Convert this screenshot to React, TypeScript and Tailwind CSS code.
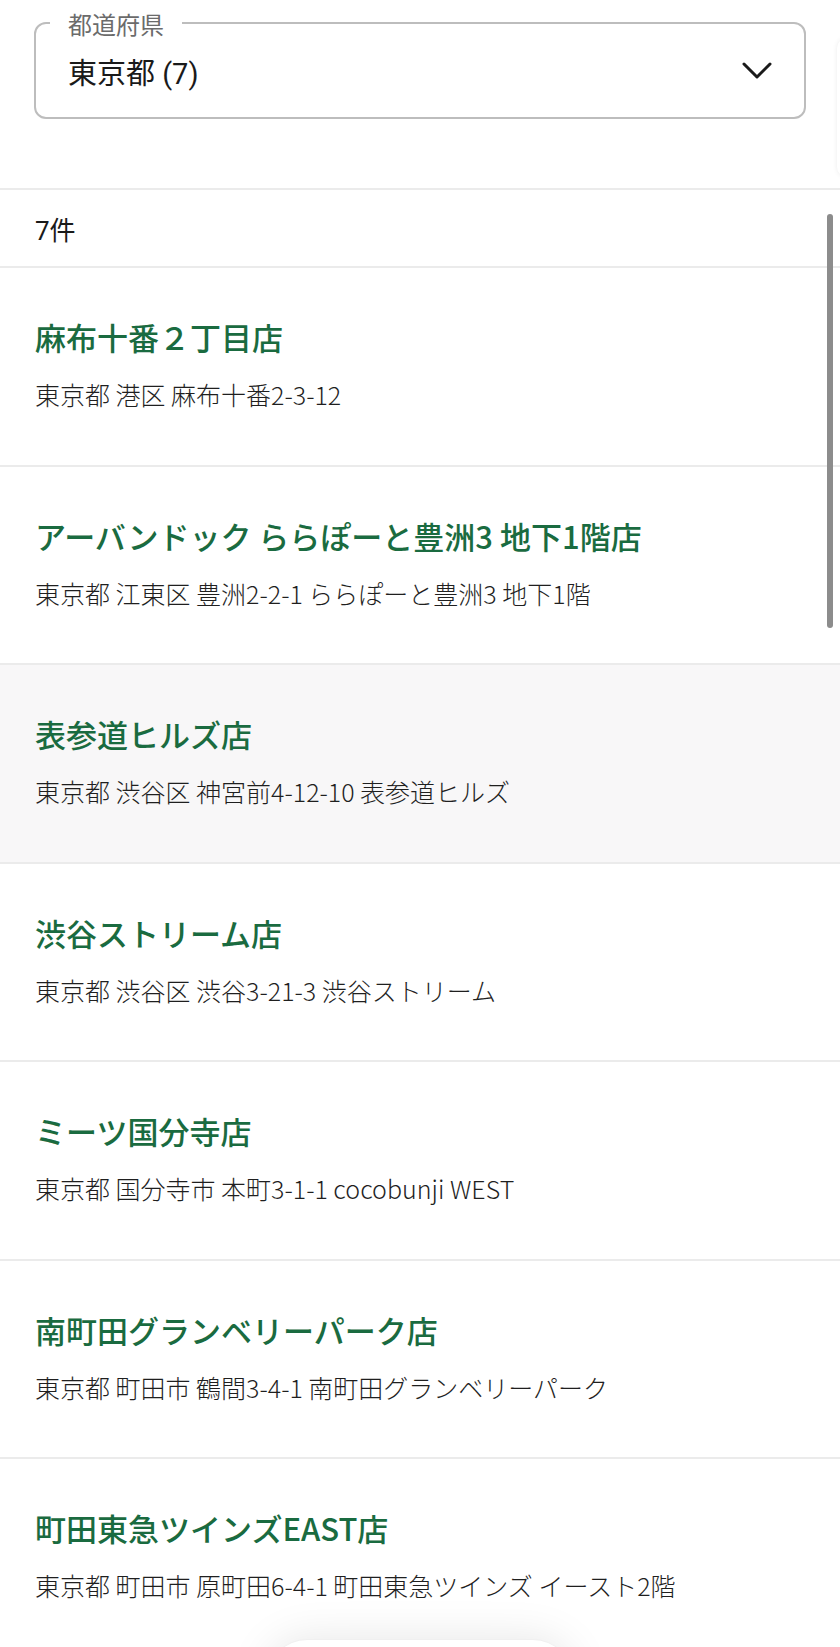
export default function App() {
  // 店舗リスト
  const stores = [
    { name: '麻布十番２丁目店', address: '東京都 港区 麻布十番2-3-12' },
    { name: 'アーバンドック ららぽーと豊洲3 地下1階店', address: '東京都 江東区 豊洲2-2-1 ららぽーと豊洲3 地下1階' },
    { name: '表参道ヒルズ店', address: '東京都 渋谷区 神宮前4-12-10 表参道ヒルズ', active: true },
    { name: '渋谷ストリーム店', address: '東京都 渋谷区 渋谷3-21-3 渋谷ストリーム' },
    { name: 'ミーツ国分寺店', address: '東京都 国分寺市 本町3-1-1 cocobunji WEST' },
    { name: '南町田グランベリーパーク店', address: '東京都 町田市 鶴間3-4-1 南町田グランベリーパーク' },
    { name: '町田東急ツインズEAST店', address: '東京都 町田市 原町田6-4-1 町田東急ツインズ イースト2階' },
  ];

  return (
    <div className="relative w-[840px] h-[1647px] overflow-hidden bg-white font-['Noto_Sans_CJK_JP',sans-serif] text-[#212121]">
      {/* 都道府県セレクト */}
      <div className="h-[188px] px-[34px] pt-[22px]">
        <div className="relative h-[97px] rounded-[12px] border-2 border-[#bdbdbd] flex items-center justify-between pl-[32px] pr-[32px]">
          <span className="absolute left-[14px] top-0 -translate-y-1/2 bg-white px-[18px] text-[24px] leading-none text-[#6b6b6b]">
            都道府県
          </span>
          <span className="mt-[6px] text-[29px] leading-[34px] font-['Roboto','Noto_Sans_CJK_JP',sans-serif] text-[#1a1a1a]">
            東京都 (7)
          </span>
          <svg width="30" height="17" viewBox="0 0 30 17" fill="none">
            <path d="M2 2L15 15L28 2" stroke="#1a1a1a" strokeWidth="3" strokeLinecap="round" strokeLinejoin="round" />
          </svg>
        </div>
      </div>

      {/* 件数 */}
      <div className="h-[78px] border-t-2 border-[#ebebeb] flex items-center pl-[35px] pt-[6px] text-[26px] font-['Roboto','Noto_Sans_CJK_JP',sans-serif] text-[#1a1a1a]">
        7件
      </div>

      {/* リスト */}
      {stores.map((s, i) => (
        <div
          key={i}
          className={`h-[198.5px] border-t-2 border-[#ebebeb] pt-[49px] pl-[35px] flex flex-col gap-[20px] ${s.active ? 'bg-[#f8f7f8]' : 'bg-white'}`}
        >
          <div className="text-[31px] leading-[40px] font-medium text-[#1a6b40] whitespace-nowrap">{s.name}</div>
          <div className="text-[25px] leading-[34px] font-light text-[#1f1f1f] whitespace-nowrap">{s.address}</div>
        </div>
      ))}

      {/* 右端のパネル影 */}
      <div className="absolute left-[837px] top-[38px] w-[24px] h-[139px] rounded-[10px] bg-white shadow-[0_0_5px_rgba(0,0,0,0.08)]" />

      {/* スクロールバー */}
      <div className="absolute left-[827px] top-[214px] w-[6px] h-[414px] rounded-full bg-[#8c8c8c]" />

      {/* 下部フローティングボタン */}
      <div className="absolute left-1/2 -translate-x-1/2 top-[1639px] w-[306px] h-[80px] rounded-full bg-white border border-[#f0f0f0] shadow-[0_0_44px_rgba(0,0,0,0.1)]" />
    </div>
  );
}
